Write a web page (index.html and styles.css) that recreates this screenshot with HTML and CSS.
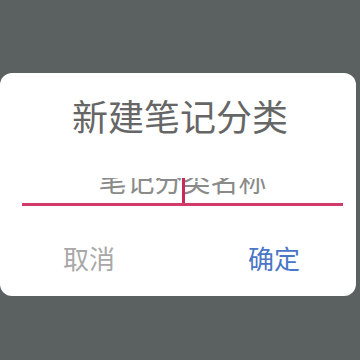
FILE: index.html
```html
<!DOCTYPE html>
<html lang="zh-CN">
<head>
    <meta charset="UTF-8">
    <meta name="viewport" content="width=device-width, initial-scale=1.0">
    <title>新建笔记分类</title>
    <link rel="stylesheet" href="styles.css">
</head>
<body>
    <div class="dialog">
        <h1 class="dialog-title">新建笔记分类</h1>

        <div class="field">
            <span class="placeholder">笔记分类名称</span>
            <span class="cursor"></span>
        </div>

        <div class="actions">
            <button class="btn btn-cancel">取消</button>
            <button class="btn btn-ok">确定</button>
        </div>
    </div>
</body>
</html>
```

FILE: styles.css
```css
* {
    margin: 0;
    padding: 0;
    box-sizing: border-box;
    font-family: 'Noto Sans CJK SC', 'Noto Sans', sans-serif;
}

body {
    background-color: #5b6061;
    width: 360px;
    height: 360px;
    overflow: hidden;
}

.dialog {
    margin-top: 73px;
    width: 356px;
    height: 223px;
    background: white;
    border-radius: 12px;
    padding-top: 24px;
}

.dialog-title {
    font-size: 36px;
    line-height: 36px;
    font-weight: normal;
    color: #666;
    text-align: center;
    padding-left: 4px;
}

.field {
    position: relative;
    margin: 45px 13px 0 22px;
    height: 28px;
    border-bottom: 3px solid #d23a6a;
    overflow: hidden;
    text-align: center;
}

.placeholder {
    display: block;
    font-size: 28px;
    line-height: 28px;
    margin-top: -12px;
    color: #8a8a8a;
}

.cursor {
    position: absolute;
    left: 160px;
    top: 0;
    bottom: 0;
    width: 3px;
    background: #c8285a;
}

.actions {
    display: flex;
    margin-top: 39px;
}

.btn {
    background: none;
    border: none;
    font-size: 26px;
    line-height: 26px;
    width: 178px;
    text-align: center;
}

.btn-cancel {
    color: #a8a8a8;
}

.btn-ok {
    color: #4a76c6;
    padding-left: 14px;
}
```
